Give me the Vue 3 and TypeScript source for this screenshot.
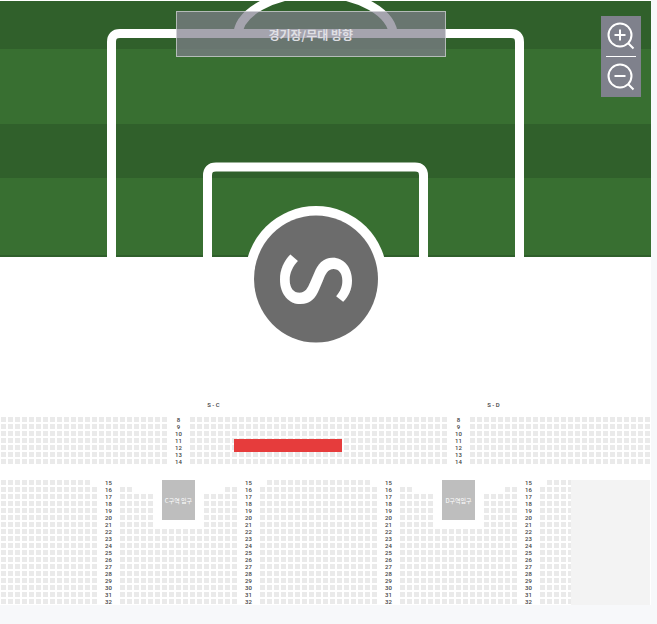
<script setup lang="ts">
interface SeatRun {
  row: number
  col: number
  cols: number
  rows: number
}

interface Label {
  text: string
  row: number
  col: number
}

// Grid line on which each tier begins
const UPPER_LINE = 4
const LOWER_LINE = 13

const seatRuns: SeatRun[] = [
  // Upper tier, rows 8 to 14
  { row: UPPER_LINE, col: 1, cols: 24, rows: 7 },
  { row: UPPER_LINE, col: 28, cols: 37, rows: 7 },
  { row: UPPER_LINE, col: 68, cols: 26, rows: 7 },
  // Lower tier, rows 15 to 32
  { row: LOWER_LINE, col: 1, cols: 13, rows: 1 },
  { row: LOWER_LINE + 1, col: 1, cols: 14, rows: 17 },
  { row: LOWER_LINE, col: 39, cols: 15, rows: 1 },
  { row: LOWER_LINE + 1, col: 38, cols: 17, rows: 17 },
  { row: LOWER_LINE, col: 79, cols: 4, rows: 1 },
  { row: LOWER_LINE + 1, col: 78, cols: 5, rows: 17 },
]

// Blocks that open around an entrance
for (const col of [18, 58]) {
  seatRuns.push(
    { row: LOWER_LINE + 1, col, cols: 2, rows: 1 },
    { row: LOWER_LINE + 1, col: col + 15, cols: 2, rows: 1 },
    { row: LOWER_LINE + 2, col, cols: 5, rows: 5 },
    { row: LOWER_LINE + 2, col: col + 12, cols: 5, rows: 5 },
    { row: LOWER_LINE + 7, col, cols: 17, rows: 11 },
  )
}

function numberColumn(first: number, last: number, line: number, col: number): Label[] {
  return Array.from({ length: last - first + 1 }, (_, i) => ({
    text: String(first + i),
    row: line + i,
    col,
  }))
}

const zones: Label[] = [
  { text: 'S - C', row: 2, col: 30 },
  { text: 'S - D', row: 2, col: 70 },
]

const rowNumbers: Label[] = [
  ...[25, 65].flatMap((col) => numberColumn(8, 14, UPPER_LINE, col)),
  ...[15, 35, 55, 75].flatMap((col) => numberColumn(15, 32, LOWER_LINE, col)),
]

const entrances: Label[] = [
  { text: 'C구역 입구', row: LOWER_LINE, col: 24 },
  { text: 'D구역입구', row: LOWER_LINE, col: 64 },
]

function area(row: number, col: number, rows: number, cols: number) {
  return { gridArea: `${row} / ${col} / span ${rows} / span ${cols}` }
}
</script>

<template>
  <main class="venue">
    <svg class="field" viewBox="0 0 651 396" preserveAspectRatio="xMidYMin slice" aria-hidden="true">
      <rect y="1" width="651" height="256" fill="#386f31" />
      <rect y="1" width="651" height="48" fill="#30602b" />
      <rect y="124" width="651" height="54" fill="#30602b" />
      <rect y="255" width="651" height="2" fill="#2f5f2b" />
      <svg y="1" width="651" height="256" viewBox="0 1 651 256">
        <path d="M237.500 37A78 44 0 0 1 393.500 37" class="line" />
        <path d="M111.500 258V42Q111.500 33.500 120 33.500H511Q519.500 33.500 519.500 42V258" class="line" />
        <path d="M207.500 258V175.500Q207.500 167 216 167H415Q423.500 167 423.500 175.500V258" class="line" />
        <circle cx="316" cy="277" r="71" fill="#fff" />
      </svg>
      <ellipse cx="316" cy="279" rx="62" ry="63.500" fill="#6c6c6c" />
      <text class="zone-mark" transform="translate(316 279) rotate(90)" y="35" text-anchor="middle">S</text>
    </svg>

    <div class="direction">경기장/무대 방향</div>

    <div class="zoom">
      <button type="button" aria-label="확대">
        <svg viewBox="0 0 40 40" aria-hidden="true">
          <circle cx="19" cy="19" r="11.500" />
          <path d="M27 27L32.500 32.500M13.500 19H24.500M19 13.500V24.500" />
        </svg>
      </button>
      <button type="button" aria-label="축소">
        <svg viewBox="0 0 40 40" aria-hidden="true">
          <circle cx="19" cy="19" r="11.500" />
          <path d="M27 27L32.500 32.500M13.500 19H24.500" />
        </svg>
      </button>
    </div>

    <section class="seats" aria-label="S">
      <div
        v-for="(run, i) in seatRuns"
        :key="`run-${i}`"
        class="run"
        :style="area(run.row, run.col, run.rows, run.cols)"
      ></div>
      <span
        v-for="zone in zones"
        :key="zone.text"
        class="label zone"
        :style="area(zone.row, zone.col, 1, 3)"
      >{{ zone.text }}</span>
      <span
        v-for="(label, i) in rowNumbers"
        :key="`label-${i}`"
        class="label"
        :style="area(label.row, label.col, 1, 3)"
      >{{ label.text }}</span>
      <div
        v-for="entrance in entrances"
        :key="entrance.text"
        class="entrance"
        :style="area(entrance.row, entrance.col, 6, 5)"
      >{{ entrance.text }}</div>
      <div class="selected" :style="area(UPPER_LINE + 3, 34, 2, 16)"></div>
      <div class="closed" :style="area(LOWER_LINE, 82, 18, 12)"></div>
    </section>
  </main>
</template>

<style>
body {
  background: #f7f8fa;
}
</style>

<style scoped>
.venue {
  position: relative;
  margin-right: 6px;
  overflow: hidden;
  background: #fff;
  font-family: Roboto, "Noto Sans CJK KR", sans-serif;
}

.field {
  display: block;
  width: 100%;
  height: 396px;
}

.line {
  fill: none;
  stroke: #fff;
  stroke-width: 9;
}

.zone-mark {
  fill: #fff;
  font-family: "Noto Sans CJK KR", sans-serif;
  font-size: 95px;
  font-weight: 500;
}

.direction {
  position: absolute;
  top: 11px;
  left: 27%;
  display: flex;
  align-items: center;
  justify-content: center;
  box-sizing: border-box;
  width: 270px;
  height: 46px;
  border: 1px solid rgba(255, 255, 255, 0.5);
  background: rgba(128, 127, 141, 0.71);
  color: #dfdfe4;
  font-family: "Noto Sans CJK KR", sans-serif;
  font-size: 12px;
  font-weight: 700;
}

.zoom {
  position: absolute;
  top: 16px;
  right: 10px;
  width: 40px;
  background: #7f818c;
}

.zoom button {
  display: block;
  width: 40px;
  height: 40px;
  padding: 0;
  border: 0;
  background: none;
  cursor: pointer;
}

.zoom button + button::before {
  content: "";
  display: block;
  height: 1px;
  margin: 0 5px;
  background: #fff;
}

.zoom button + button {
  height: 41px;
}

.zoom svg {
  display: block;
  width: 40px;
  height: 40px;
  fill: none;
  stroke: #fff;
  stroke-width: 2;
}

.seats {
  display: grid;
  grid-template-columns: repeat(93, 5px);
  grid-template-rows: repeat(30, 5px);
  gap: 2px;
  padding: 0 1px 1px;
}

.run {
  background:
    repeating-linear-gradient(to right, transparent 0 5px, #fff 5px 7px),
    repeating-linear-gradient(to bottom, #eaeaea 0 5px, #fff 5px 7px);
}

.label {
  color: #444;
  font-size: 6px;
  font-weight: 500;
  line-height: 5px;
  text-align: center;
  white-space: nowrap;
}

.zone {
  line-height: 3px;
}

.entrance {
  display: flex;
  align-items: center;
  justify-content: center;
  background: #bebebe;
  color: #fff;
  font-family: "Noto Sans CJK KR", sans-serif;
  font-size: 6px;
  white-space: nowrap;
}

.selected {
  margin: 1px 0 -2px 2px;
  background: #e63c3c;
}

.closed {
  margin: 0 0 -1px 3px;
  background: #f3f3f3;
}
</style>
